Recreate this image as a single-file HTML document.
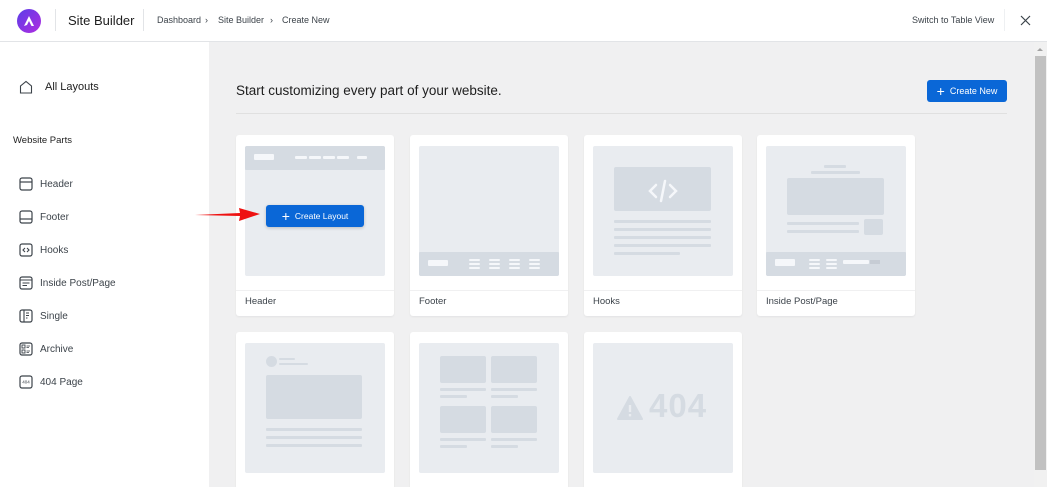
<!DOCTYPE html>
<html><head><meta charset="utf-8"><style>
*{margin:0;padding:0;box-sizing:border-box}
html,body{width:1047px;height:487px;overflow:hidden}
body{font-family:"Liberation Sans",sans-serif;background:#f0f0f1;position:relative;color:#1e1e1e}
.a{position:absolute}
#top{left:0;top:0;width:1047px;height:42px;background:#fff;border-bottom:1px solid #e2e4e7}
#side{left:0;top:42px;width:209px;height:445px;background:#fff}
.nav{position:absolute;left:19px;font-size:10px;color:#3c434a;display:flex;align-items:center;gap:7px}
.nav svg{width:14px;height:14px}
.card{position:absolute;width:158px;height:181px;background:#fff;border-radius:3px;box-shadow:0 1px 2px rgba(0,0,0,.06)}
.pv{position:absolute;left:9px;top:11px;width:140px;height:130px;background:#e9ecf0;border-radius:2px;overflow:hidden}
.lb{position:absolute;left:0;top:155px;width:100%;border-top:1px solid #f0f0f1;padding:5px 9px;font-size:9.5px;color:#3c434a}
.g{position:absolute;background:#d5dbe2;border-radius:1px}
.w{position:absolute;background:#f5f7fa;border-radius:1px}
.btn{position:absolute;background:#0a67d7;color:#fff;border-radius:3px;font-size:8.5px;display:flex;align-items:center;justify-content:center;gap:5px}
</style></head><body>
<div id="top" class="a">
 <div class="a" style="left:17px;top:9px;width:24px;height:24px;border-radius:50%;background:linear-gradient(135deg,#5b3ee8,#b02ce0)"></div>
 <svg class="a" style="left:22px;top:14px" width="14" height="14" viewBox="0 0 14 14"><path d="M2 12 L7 2 L12 12 L9.5 12 L7 7 L5 11 Z" fill="#fff"/></svg>
 <div class="a" style="left:55px;top:9px;width:1px;height:22px;background:#e2e4e7"></div>
 <div class="a" style="left:68px;top:13px;font-size:13px;color:#1e1e1e">Site Builder</div>
 <div class="a" style="left:143px;top:9px;width:1px;height:22px;background:#e2e4e7"></div>
 <div class="a" style="left:157px;top:15px;font-size:9px;color:#3c434a">Dashboard</div>
 <div class="a" style="left:205px;top:15px;font-size:9px;color:#3c434a">›</div>
 <div class="a" style="left:218px;top:15px;font-size:9px;color:#3c434a">Site Builder</div>
 <div class="a" style="left:270px;top:15px;font-size:9px;color:#3c434a">›</div>
 <div class="a" style="left:282px;top:15px;font-size:9px;color:#3c434a">Create New</div>
 <div class="a" style="left:912px;top:15px;font-size:9px;color:#3c434a">Switch to Table View</div>
 <div class="a" style="left:1004px;top:9px;width:1px;height:22px;background:#eef0f2"></div>
 <svg class="a" style="left:1020px;top:15px" width="11" height="11" viewBox="0 0 11 11"><path d="M1 1L10 10M10 1L1 10" stroke="#3c434a" stroke-width="1.2"/></svg>
</div>
<div id="side" class="a">
 <div class="nav" style="top:38px;font-size:11px;color:#1e1e1e;gap:12px"><svg viewBox="0 0 14 14"><path d="M1.5 13V6L7 1.5L12.5 6V13Z" fill="none" stroke="#3c434a" stroke-width="1.1"/></svg>All Layouts</div>
 <div class="a" style="left:13px;top:93px;font-size:9.5px;color:#1e1e1e">Website Parts</div>
 <div class="nav" style="top:135px"><svg viewBox="0 0 14 14"><rect x="1" y="1" width="12" height="12" rx="2" fill="none" stroke="#3c434a" stroke-width="1.2"/><path d="M1 5H13" stroke="#3c434a" stroke-width="1.2"/></svg>Header</div>
 <div class="nav" style="top:168px"><svg viewBox="0 0 14 14"><rect x="1" y="1" width="12" height="12" rx="2" fill="none" stroke="#3c434a" stroke-width="1.2"/><path d="M1 9H13" stroke="#3c434a" stroke-width="1.2"/></svg>Footer</div>
 <div class="nav" style="top:201px"><svg viewBox="0 0 14 14"><rect x="1" y="1" width="12" height="12" rx="2" fill="none" stroke="#3c434a" stroke-width="1.2"/><path d="M6 5L4 7L6 9M8 5L10 7L8 9" fill="none" stroke="#3c434a" stroke-width="1.1"/></svg>Hooks</div>
 <div class="nav" style="top:234px"><svg viewBox="0 0 14 14"><rect x="1" y="1" width="12" height="12" rx="2" fill="none" stroke="#3c434a" stroke-width="1.2"/><path d="M1 4H13M3.5 7H10.5M3.5 9.5H8" stroke="#3c434a" stroke-width="1.1"/></svg>Inside Post/Page</div>
 <div class="nav" style="top:267px"><svg viewBox="0 0 14 14"><rect x="1" y="1" width="12" height="12" rx="2" fill="none" stroke="#3c434a" stroke-width="1.2"/><path d="M5 1V13M7 4H10M7 6.5H10M7 9H8.5" stroke="#3c434a" stroke-width="1.1"/></svg>Single</div>
 <div class="nav" style="top:300px"><svg viewBox="0 0 14 14"><rect x="1" y="1" width="12" height="12" rx="2" fill="none" stroke="#3c434a" stroke-width="1.2"/><rect x="3" y="3" width="3" height="3" fill="none" stroke="#3c434a" stroke-width=".9"/><rect x="3" y="8" width="3" height="3" fill="none" stroke="#3c434a" stroke-width=".9"/><path d="M7.5 4H11M7.5 5.5H10M7.5 9H11M7.5 10.5H10" stroke="#3c434a" stroke-width=".8"/></svg>Archive</div>
 <div class="nav" style="top:333px"><svg viewBox="0 0 14 14"><rect x="1" y="1" width="12" height="12" rx="2" fill="none" stroke="#3c434a" stroke-width="1.2"/><text x="7" y="8.6" font-size="4.5" text-anchor="middle" fill="#3c434a" font-family="Liberation Sans">404</text></svg>404 Page</div>
</div>
<div class="a" style="left:236px;top:83px;font-size:13.5px;color:#1e1e1e">Start customizing every part of your website.</div>
<div class="btn" style="left:927px;top:80px;width:80px;height:22px;font-size:9px"><span style="font-size:14px;font-weight:300">+</span>Create New</div>
<div class="a" style="left:236px;top:113px;width:771px;height:1px;background:#e0e0e0"></div>

<div class="card" style="left:236px;top:135px"><div class="pv">
 <div class="g" style="left:0;top:0;width:140px;height:24px"></div>
 <div class="w" style="left:9px;top:8px;width:20px;height:6px"></div>
 <div class="w" style="left:50px;top:10px;width:12px;height:3px"></div><div class="w" style="left:64px;top:10px;width:12px;height:3px"></div><div class="w" style="left:78px;top:10px;width:12px;height:3px"></div><div class="w" style="left:92px;top:10px;width:12px;height:3px"></div><div class="w" style="left:112px;top:10px;width:10px;height:3px"></div>
</div><div class="lb">Header</div></div>
<div class="card" style="left:410px;top:135px"><div class="pv">
 <div class="g" style="left:0;top:106px;width:140px;height:24px"></div>
 <div class="w" style="left:9px;top:114px;width:20px;height:6px"></div>
 <div class="w" style="left:50px;top:113px;width:11px;height:2px"></div><div class="w" style="left:50px;top:117px;width:11px;height:2px"></div><div class="w" style="left:50px;top:121px;width:11px;height:2px"></div>
 <div class="w" style="left:70px;top:113px;width:11px;height:2px"></div><div class="w" style="left:70px;top:117px;width:11px;height:2px"></div><div class="w" style="left:70px;top:121px;width:11px;height:2px"></div>
 <div class="w" style="left:90px;top:113px;width:11px;height:2px"></div><div class="w" style="left:90px;top:117px;width:11px;height:2px"></div><div class="w" style="left:90px;top:121px;width:11px;height:2px"></div>
 <div class="w" style="left:110px;top:113px;width:11px;height:2px"></div><div class="w" style="left:110px;top:117px;width:11px;height:2px"></div><div class="w" style="left:110px;top:121px;width:11px;height:2px"></div>
</div><div class="lb">Footer</div></div>
<div class="card" style="left:584px;top:135px"><div class="pv">
 <div class="g" style="left:21px;top:21px;width:97px;height:44px;border-radius:2px"></div>
 <svg class="a" style="left:55px;top:32px" width="30" height="26" viewBox="0 0 30 26"><path d="M8 7L2 13L8 19M22 7L28 13L22 19M17 3L13 23" fill="none" stroke="#f5f7fa" stroke-width="2.5" stroke-linecap="round"/></svg>
 <div class="g" style="left:21px;top:74px;width:97px;height:3px"></div><div class="g" style="left:21px;top:82px;width:97px;height:3px"></div><div class="g" style="left:21px;top:90px;width:97px;height:3px"></div><div class="g" style="left:21px;top:98px;width:97px;height:3px"></div><div class="g" style="left:21px;top:106px;width:66px;height:3px"></div>
</div><div class="lb">Hooks</div></div>
<div class="card" style="left:757px;top:135px"><div class="pv">
 <div class="g" style="left:58px;top:19px;width:22px;height:3px"></div><div class="g" style="left:45px;top:25px;width:49px;height:3px"></div>
 <div class="g" style="left:21px;top:32px;width:97px;height:37px;border-radius:2px"></div>
 <div class="g" style="left:21px;top:76px;width:72px;height:3px"></div><div class="g" style="left:21px;top:84px;width:72px;height:3px"></div>
 <div class="g" style="left:98px;top:73px;width:19px;height:16px;border-radius:2px"></div>
 <div class="g" style="left:0;top:106px;width:140px;height:24px"></div>
 <div class="w" style="left:9px;top:113px;width:20px;height:7px"></div>
 <div class="w" style="left:43px;top:113px;width:11px;height:2px"></div><div class="w" style="left:43px;top:117px;width:11px;height:2px"></div><div class="w" style="left:43px;top:121px;width:11px;height:2px"></div>
 <div class="w" style="left:60px;top:113px;width:11px;height:2px"></div><div class="w" style="left:60px;top:117px;width:11px;height:2px"></div><div class="w" style="left:60px;top:121px;width:11px;height:2px"></div>
 <div class="w" style="left:77px;top:114px;width:26px;height:4px"></div><div class="a" style="left:104px;top:114px;width:10px;height:4px;background:#c6ccd4"></div>
</div><div class="lb">Inside Post/Page</div></div>

<div class="card" style="left:236px;top:332px;height:160px"><div class="pv">
 <div class="g" style="left:21px;top:13px;width:11px;height:11px;border-radius:50%"></div>
 <div class="g" style="left:34px;top:15px;width:16px;height:2px"></div><div class="g" style="left:34px;top:20px;width:29px;height:2px"></div>
 <div class="g" style="left:21px;top:32px;width:96px;height:44px;border-radius:2px"></div>
 <div class="g" style="left:21px;top:85px;width:96px;height:3px"></div><div class="g" style="left:21px;top:93px;width:96px;height:3px"></div><div class="g" style="left:21px;top:101px;width:96px;height:3px"></div>
</div></div>
<div class="card" style="left:410px;top:332px;height:160px"><div class="pv">
 <div class="g" style="left:21px;top:13px;width:46px;height:27px;border-radius:2px"></div><div class="g" style="left:72px;top:13px;width:46px;height:27px;border-radius:2px"></div>
 <div class="g" style="left:21px;top:45px;width:46px;height:3px"></div><div class="g" style="left:72px;top:45px;width:46px;height:3px"></div>
 <div class="g" style="left:21px;top:52px;width:27px;height:3px"></div><div class="g" style="left:72px;top:52px;width:27px;height:3px"></div>
 <div class="g" style="left:21px;top:63px;width:46px;height:27px;border-radius:2px"></div><div class="g" style="left:72px;top:63px;width:46px;height:27px;border-radius:2px"></div>
 <div class="g" style="left:21px;top:95px;width:46px;height:3px"></div><div class="g" style="left:72px;top:95px;width:46px;height:3px"></div>
 <div class="g" style="left:21px;top:102px;width:27px;height:3px"></div><div class="g" style="left:72px;top:102px;width:27px;height:3px"></div>
</div></div>
<div class="card" style="left:584px;top:332px;height:160px"><div class="pv">
 <svg class="a" style="left:24px;top:53px" width="26" height="24" viewBox="0 0 26 24"><path d="M13 1L25 23H1Z" fill="#d5dbe2" stroke="#d5dbe2" stroke-linejoin="round" stroke-width="2"/><path d="M13 9V16" stroke="#e9ecf0" stroke-width="2.4"/><rect x="11.8" y="18" width="2.4" height="2.4" fill="#e9ecf0"/></svg>
 <div class="a" style="left:56px;top:44px;font-size:33px;font-weight:bold;color:#d5dbe2;letter-spacing:1px">404</div>
</div></div>

<div class="btn" style="left:266px;top:205px;width:98px;height:22px;box-shadow:0 1px 3px rgba(0,0,0,.2)"><span style="font-size:14px;font-weight:300">+</span>Create Layout</div>
<svg class="a" style="left:194px;top:205px" width="68" height="18" viewBox="0 0 68 18"><path d="M1 10L46 8L45 3L66 9L45 16L46 11Z" fill="#ee1111"/></svg>

<div class="a" style="left:1034px;top:42px;width:13px;height:445px;background:#f1f1f1"></div>
<div class="a" style="left:1035px;top:56px;width:11px;height:414px;background:#c1c1c1"></div>
<div class="a" style="left:1037px;top:48px;width:0;height:0;border-left:3px solid transparent;border-right:3px solid transparent;border-bottom:3px solid #a3a3a3"></div>
</body></html>
